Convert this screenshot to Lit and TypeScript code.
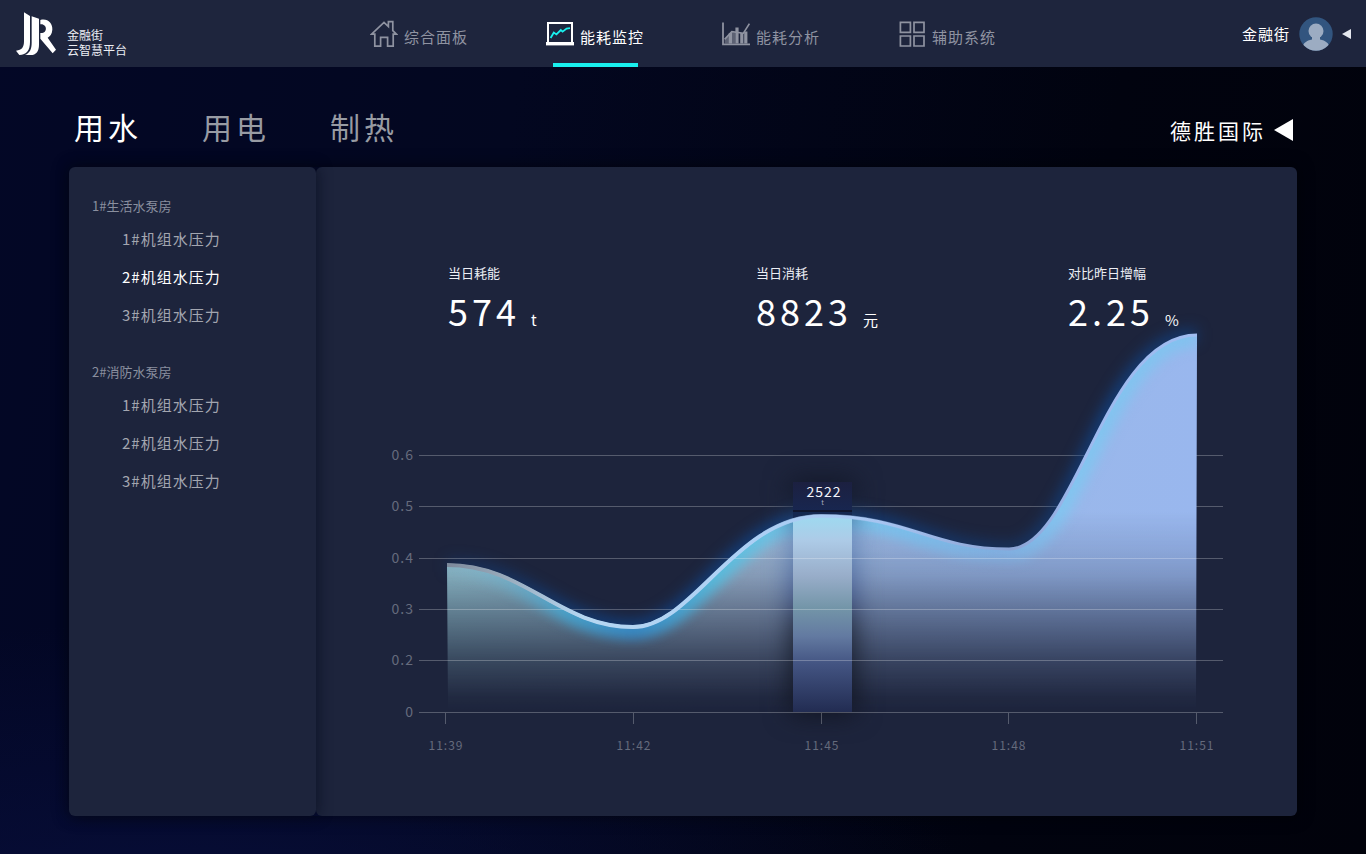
import { LitElement, html, svg, css } from "lit";
import { customElement, state } from "lit/decorators.js";

const NAV = ["综合面板", "能耗监控", "能耗分析", "辅助系统"];
const TABS = ["用水", "用电", "制热"];
const GROUPS = [
  { title: "1#生活水泵房", items: ["1#机组水压力", "2#机组水压力", "3#机组水压力"] },
  { title: "2#消防水泵房", items: ["1#机组水压力", "2#机组水压力", "3#机组水压力"] },
];
const STATS = [
  { label: "当日耗能", value: "574", unit: "t" },
  { label: "当日消耗", value: "8823", unit: "元" },
  { label: "对比昨日增幅", value: "2.25", unit: "%" },
];

const NAV_ICONS = [
  html`<svg class="icon" viewBox="0 0 28 28" fill="none" stroke="currentColor" stroke-width="1.7" aria-hidden="true">
    <path d="M4.8 14.2H1.6L14 2.4l4.4 4.2V1.6h4.4v9l3.6 3.6h-3.2V26.2h-5.6v-8.8h-7v8.8H4.8z" />
  </svg>`,
  html`<svg class="icon" viewBox="0 0 28 28" fill="none" aria-hidden="true">
    <path d="M2 3h24v20H2z" stroke="#fff" stroke-width="2" />
    <path d="M0 22h28v3.4H0z" fill="#fff" />
    <path d="M4.6 18l3.2-5.4 2.6 1.8 4.4-4.4 1.8 1.6 4-3 3.4-.4" stroke="#19f0ee" stroke-width="1.8" />
  </svg>`,
  html`<svg class="icon" viewBox="0 0 28 28" fill="none" aria-hidden="true">
    <path d="M1 2.6V24.4H28" stroke="currentColor" stroke-width="1.8" />
    <path d="M2.6 20L9.4 12.2l4 .6V23.5H2.6z" fill="currentColor" fill-opacity="0.55" />
    <path d="M8.4 13v10.5M15 7.5v16M19.8 13v10.5M23.8 11.500v12" stroke="currentColor" stroke-width="3.2" />
    <path d="M2.6 19.4L9.8 11.6l11.6 1.6L27.4 3.6" stroke="currentColor" stroke-width="1.6" />
  </svg>`,
  html`<svg class="icon" viewBox="0 0 28 28" fill="none" stroke="currentColor" stroke-width="1.7" aria-hidden="true">
    <path d="M2.4 2.4h10v10h-10zM16 2.4h10v10H16zM2.4 16h10v10h-10zM16 16h10v10H16z" />
  </svg>`,
];

const CURVE =
  "M447 565C525 565 559 627 633 627C693 627 736 516 821 516C910 516 930 549 1009 549C1076 549 1103 335 1197 335";
const AREA = `${CURVE}L1196 712H448Z`;
const Y_TICKS = [
  { label: "0.6", y: 456 },
  { label: "0.5", y: 507 },
  { label: "0.4", y: 559 },
  { label: "0.3", y: 610 },
  { label: "0.2", y: 661 },
  { label: "0", y: 713 },
];
const X_TICKS = [
  { label: "11:39", x: 446 },
  { label: "11:42", x: 634 },
  { label: "11:45", x: 822 },
  { label: "11:48", x: 1009 },
  { label: "11:51", x: 1197 },
];

@customElement("usage-chart")
export class UsageChart extends LitElement {
  static styles = css`
    :host {
      display: block;
    }
    .chart {
      display: block;
      width: 100%;
      height: auto;
      overflow: visible;
      font-family: "Noto Sans CJK SC", sans-serif;
      letter-spacing: 1px;
    }
    .grid {
      stroke: #fff;
      stroke-opacity: 0.25;
      stroke-width: 1;
    }
    .y-label {
      fill: #656b7c;
      font-size: 14px;
      text-anchor: end;
    }
    .x-label {
      fill: #656b7c;
      font-size: 12px;
      text-anchor: middle;
    }
    .tip {
      fill: #f2f4fa;
      font-size: 14px;
      text-anchor: middle;
    }
    .tip-unit {
      fill: #a5abc0;
      font-size: 7px;
      text-anchor: middle;
    }
  `;

  private line(y: number) {
    return svg`<path class="grid" d="M419 ${y - 0.5}H1223" />`;
  }

  render() {
    return html`<svg class="chart" viewBox="316 330 981 440" role="img" aria-label="当日耗能">
      <defs>
        <linearGradient id="hue" gradientUnits="userSpaceOnUse" x1="447" y1="0" x2="1197" y2="0">
          <stop offset="0" stop-color="#9dcfdc" />
          <stop offset="0.4" stop-color="#a3bcd8" />
          <stop offset="0.6" stop-color="#9bb8e6" />
          <stop offset="1" stop-color="#99b7ee" />
        </linearGradient>
        <linearGradient id="fade" gradientUnits="userSpaceOnUse" x1="0" y1="512" x2="0" y2="712">
          <stop offset="0" stop-color="#fff" />
          <stop offset="0.2" stop-color="#fff" stop-opacity="0.88" />
          <stop offset="0.32" stop-color="#fff" stop-opacity="0.78" />
          <stop offset="0.5" stop-color="#fff" stop-opacity="0.53" />
          <stop offset="0.74" stop-color="#fff" stop-opacity="0.22" />
          <stop offset="0.93" stop-color="#fff" stop-opacity="0.03" />
          <stop offset="1" stop-color="#fff" stop-opacity="0" />
        </linearGradient>
        <mask id="fade-mask" maskUnits="userSpaceOnUse" x="316" y="300" width="981" height="460">
          <rect x="316" y="300" width="981" height="460" fill="url(#fade)" />
        </mask>
        <linearGradient id="edge" gradientUnits="userSpaceOnUse" x1="447" y1="0" x2="1197" y2="0">
          <stop offset="0" stop-color="#7d899b" />
          <stop offset="0.08" stop-color="#9aacbd" />
          <stop offset="0.18" stop-color="#b5d6f1" />
          <stop offset="0.4" stop-color="#add0f5" />
          <stop offset="0.58" stop-color="#a6c3f0" />
          <stop offset="0.75" stop-color="#8ba3d4" />
          <stop offset="0.85" stop-color="#9db9ee" />
          <stop offset="1" stop-color="#a0bcf0" />
        </linearGradient>
        <linearGradient id="edge-wide" gradientUnits="userSpaceOnUse" x1="447" y1="0" x2="1197" y2="0">
          <stop offset="0" stop-color="#7d899b" />
          <stop offset="0.08" stop-color="#9aacbd" />
          <stop offset="0.18" stop-color="#b5d6f1" />
          <stop offset="0.4" stop-color="#add0f5" />
          <stop offset="0.65" stop-color="#a6c3f0" stop-opacity="0" />
        </linearGradient>
        <linearGradient id="outer" gradientUnits="userSpaceOnUse" x1="447" y1="0" x2="1197" y2="0">
          <stop offset="0" stop-color="#0d4a98" stop-opacity="0.25" />
          <stop offset="0.2" stop-color="#0d4a98" stop-opacity="0.65" />
          <stop offset="0.5" stop-color="#0d4a98" stop-opacity="0.7" />
          <stop offset="0.75" stop-color="#0d4a98" stop-opacity="0.35" />
          <stop offset="0.88" stop-color="#0d4a98" stop-opacity="0.7" />
          <stop offset="1" stop-color="#0d4a98" stop-opacity="0.5" />
        </linearGradient>
        <linearGradient id="inner" gradientUnits="userSpaceOnUse" x1="447" y1="0" x2="1197" y2="0">
          <stop offset="0" stop-color="#7fc8dc" stop-opacity="0" />
          <stop offset="0.08" stop-color="#5fc0dc" stop-opacity="0.35" />
          <stop offset="0.16" stop-color="#3fb0dc" stop-opacity="0.85" />
          <stop offset="0.25" stop-color="#2f8fd0" stop-opacity="0.95" />
          <stop offset="0.36" stop-color="#49c4e4" stop-opacity="0.9" />
          <stop offset="0.5" stop-color="#6cccf0" stop-opacity="0.9" />
          <stop offset="0.62" stop-color="#6cc4f0" stop-opacity="0.8" />
          <stop offset="0.74" stop-color="#70bcee" stop-opacity="0.45" />
          <stop offset="0.82" stop-color="#76ccf2" stop-opacity="0.8" />
          <stop offset="1" stop-color="#76c8f0" stop-opacity="0.8" />
        </linearGradient>
        <linearGradient id="bar" gradientUnits="userSpaceOnUse" x1="0" y1="512" x2="0" y2="712">
          <stop offset="0" stop-color="#9bdcf2" />
          <stop offset="0.14" stop-color="#adcbe7" />
          <stop offset="0.32" stop-color="#98adc9" />
          <stop offset="0.48" stop-color="#7395a8" />
          <stop offset="0.62" stop-color="#637aa1" />
          <stop offset="0.76" stop-color="#435482" />
          <stop offset="1" stop-color="#222c52" />
        </linearGradient>
        <linearGradient id="shade" gradientUnits="userSpaceOnUse" x1="0" y1="482" x2="0" y2="714">
          <stop offset="0" stop-color="#10131f" stop-opacity="0.95" />
          <stop offset="0.1" stop-color="#111a30" stop-opacity="0.75" />
          <stop offset="0.2" stop-color="#3f70b0" stop-opacity="0.45" />
          <stop offset="0.5" stop-color="#2c3f7c" stop-opacity="0.75" />
          <stop offset="0.62" stop-color="#141a28" stop-opacity="0.85" />
          <stop offset="1" stop-color="#10131e" stop-opacity="0.95" />
        </linearGradient>
        <linearGradient id="tip-fill" x1="0" y1="0" x2="0" y2="1">
          <stop offset="0" stop-color="#1c2040" />
          <stop offset="1" stop-color="#18264f" />
        </linearGradient>
        <filter id="blur-outer" color-interpolation-filters="sRGB" filterUnits="userSpaceOnUse" x="400" y="290" width="850" height="400">
          <feGaussianBlur stdDeviation="7" />
        </filter>
        <filter id="blur-inner" color-interpolation-filters="sRGB" filterUnits="userSpaceOnUse" x="400" y="290" width="850" height="400">
          <feGaussianBlur stdDeviation="6" />
        </filter>
        <filter id="blur-shade" color-interpolation-filters="sRGB" filterUnits="userSpaceOnUse" x="720" y="430" width="210" height="340">
          <feGaussianBlur stdDeviation="13" />
        </filter>
        <clipPath id="area-clip"><path d=${AREA} /></clipPath>
      </defs>

      ${Y_TICKS.slice(0, 2).map((t) => this.line(t.y))}
      <path d=${CURVE} fill="none" stroke="url(#outer)" stroke-width="14" filter="url(#blur-outer)" />
      <g mask="url(#fade-mask)"><path d=${AREA} fill="url(#hue)" /></g>
      <g clip-path="url(#area-clip)">
        <path d=${CURVE} fill="none" stroke="url(#inner)" stroke-width="24" stroke-opacity="0.8" filter="url(#blur-inner)" />
      </g>
      <rect x="790" y="480" width="65" height="234" fill="url(#shade)" filter="url(#blur-shade)" />
      <path d="M793 512h59v12h-59z" fill="#14274f" />
      <g clip-path="url(#area-clip)">
        <rect x="793" y="512" width="59" height="201" fill="url(#bar)" />
      </g>
      ${Y_TICKS.slice(2).map((t) => this.line(t.y))}
      <path d=${CURVE} fill="none" stroke="url(#edge)" stroke-width="3" />
      <path d=${CURVE} fill="none" stroke="url(#edge-wide)" stroke-width="4" />
      <rect x="793" y="482" width="59" height="28" fill="url(#tip-fill)" />
      <path d="M793 511h59" stroke="#10162e" stroke-width="2" />
      <text class="tip" x="824" y="497">2522</text>
      <text class="tip-unit" x="823" y="505">t</text>

      ${Y_TICKS.map((t) => svg`<text class="y-label" x="414" y=${t.y + 4}>${t.label}</text>`)}
      ${X_TICKS.map(
        (t) => svg`<path class="grid" d="M${t.x - 0.5} 713V724" />
          <text class="x-label" x=${t.x} y="750">${t.label}</text>`
      )}
    </svg>`;
  }
}

@customElement("app-root")
export class AppRoot extends LitElement {
  @state() private tab = 0;
  @state() private unit = "0-1";

  static styles = css`
    :host {
      display: flex;
      flex-direction: column;
      box-sizing: border-box;
      min-height: 100vh;
      color: #fff;
      font-family: "Noto Sans CJK SC", sans-serif;
      background:
        radial-gradient(ellipse 60% 35% at 12% 108%, rgba(10, 18, 72, 0.6), transparent),
        linear-gradient(100deg, #030726 0%, #030720 35%, #01030f 75%, #01020b 100%);
    }
    a {
      color: inherit;
      text-decoration: none;
    }
    button,
    select {
      appearance: none;
      margin: 0;
      padding: 0;
      border: 0;
      background: none;
      color: inherit;
      font: inherit;
      letter-spacing: inherit;
      cursor: pointer;
    }
    .header {
      display: grid;
      grid-template-columns: 1fr auto 1fr;
      height: 67px;
      background: #1e253d;
    }
    .brand {
      display: flex;
      align-items: flex-start;
      gap: 11px;
      padding: 12px 0 0 16px;
      font-size: 12px;
      line-height: 15px;
      color: #eceef4;
    }
    .logo {
      width: 40px;
      height: 44px;
    }
    .brand-name {
      padding-top: 15px;
    }
    .nav {
      display: grid;
      grid-template-columns: repeat(4, 176px);
    }
    .nav-link {
      display: flex;
      align-items: center;
      justify-content: center;
      gap: 6px;
      padding-top: 6px;
      font-size: 15px;
      letter-spacing: 1px;
      color: #8f93a1;
    }
    .nav-link.active {
      color: #fff;
      background: linear-gradient(#19f0ee, #19f0ee) center bottom / 85px 4px no-repeat;
    }
    .icon {
      width: 28px;
      height: 28px;
      margin-bottom: 6px;
    }
    .user {
      display: flex;
      align-items: center;
      justify-self: end;
      gap: 9px;
      padding-right: 15px;
      font-size: 15px;
      letter-spacing: 1px;
    }
    .avatar {
      width: 34px;
      height: 34px;
    }
    .caret {
      width: 9px;
      height: 10px;
    }
    .main {
      padding: 0 69px 38px;
    }
    .bar {
      display: flex;
      align-items: center;
      justify-content: space-between;
      height: 100px;
      padding: 18px 4px 0 5px;
      box-sizing: border-box;
    }
    .tabs {
      display: flex;
      gap: 60px;
    }
    .tab {
      font-size: 30px;
      line-height: 44px;
      letter-spacing: 4px;
      color: #989ba3;
    }
    .tab.active {
      color: #fff;
    }
    .site {
      display: flex;
      align-items: center;
      gap: 8px;
      font-size: 21px;
      line-height: 32px;
      letter-spacing: 3px;
      padding-top: 8px;
    }
    .site option {
      color: #000;
    }
    .site-caret {
      width: 19px;
      height: 22px;
    }
    .panels {
      display: grid;
      grid-template-columns: 247px 1fr;
      box-shadow: 0 0 16px rgba(0, 0, 0, 0.5);
      border-radius: 6px;
    }
    .sidebar,
    .board {
      background: #1d243c;
      border-radius: 6px;
    }
    .sidebar {
      position: relative;
      z-index: 1;
      padding: 25px 23px;
      box-shadow: 2px 0 14px rgba(5, 10, 26, 0.6);
    }
    .group {
      margin-bottom: 24px;
    }
    .group-title {
      margin: 0;
      font-size: 13px;
      font-weight: 400;
      line-height: 28px;
      color: #8a8f9f;
    }
    .list {
      margin: 0;
      padding: 0 0 0 30px;
      list-style: none;
    }
    .item {
      display: block;
      font-size: 15px;
      line-height: 38px;
      letter-spacing: 1px;
      color: #a3a6b0;
    }
    .item.active {
      color: #fff;
    }
    .board {
      padding: 96px 0 46px;
    }
    .stats {
      display: grid;
      grid-template-columns: 308fr 312fr 150fr;
      margin: 0;
      padding: 0 79px 0 132px;
    }
    .stat-label {
      font-size: 13px;
      line-height: 20px;
      color: #eceef4;
    }
    .stat-value {
      display: flex;
      align-items: baseline;
      gap: 11px;
      margin: 0;
      font-size: 36px;
      line-height: 54px;
      letter-spacing: 4px;
    }
    .stat-unit {
      font-size: 15px;
      line-height: 20px;
      letter-spacing: 0;
    }
    .plot {
      display: block;
      margin-top: -7px;
    }
  `;

  render() {
    return html`
      <header class="header">
        <a class="brand" href="#">
          <svg class="logo" viewBox="48 36 120 132" fill="#fff" aria-hidden="true">
            <path d="M72 37L90 48V126C90 150 80 165 58 165L48 152C66 151 72 141 72 124Z" />
            <path d="M95 49L117 56V134C117 154 108 165 92 165H75C90 158 95 147 95 128Z" />
            <path d="M121 60C143 54 158 70 157 89C156 102 150 109 143 113L168 149L158 160L121 116V99H127C140 97 141 80 131 75C128 73 125 73 121 73Z" />
          </svg>
          <span class="brand-name">金融街<br />云智慧平台</span>
        </a>
        <nav class="nav">
          ${NAV.map(
            (name, i) => html`<a class="nav-link ${i === 1 ? "active" : ""}" href="#">${NAV_ICONS[i]}<span>${name}</span></a>`
          )}
        </nav>
        <button class="user" type="button">
          <span>金融街</span>
          <svg class="avatar" viewBox="0 0 34 34" aria-hidden="true">
            <clipPath id="round"><circle cx="17" cy="17" r="16.7" /></clipPath>
            <circle cx="17" cy="17" r="16.7" fill="#32557f" />
            <g clip-path="url(#round)" fill="#9cacc2">
              <circle cx="17" cy="14" r="7.5" />
              <path d="M13 18h8v4.5c5.5 1 9.5 4 9.5 8.5v5H3.5v-5c0-4.5 4-7.5 9.5-8.5z" />
            </g>
          </svg>
          <svg class="caret" viewBox="0 0 9 10" aria-hidden="true"><path d="M9 0v10L0 5z" fill="#e4e7ee" /></svg>
        </button>
      </header>
      <main class="main">
        <div class="bar">
          <div class="tabs" role="tablist">
            ${TABS.map(
              (name, i) => html`<button
                class="tab ${i === this.tab ? "active" : ""}"
                type="button"
                role="tab"
                aria-selected=${i === this.tab}
                @click=${() => (this.tab = i)}
              >${name}</button>`
            )}
          </div>
          <label class="site">
            <select aria-label="德胜国际">
              <option>德胜国际</option>
            </select>
            <svg class="site-caret" viewBox="0 0 19 22" aria-hidden="true"><path d="M19 0v22L0 11z" fill="#fff" /></svg>
          </label>
        </div>
        <div class="panels">
          <aside class="sidebar">
            ${GROUPS.map(
              (g, gi) => html`<section class="group">
                <h2 class="group-title">${g.title}</h2>
                <ul class="list">
                  ${g.items.map((name, i) => {
                    const key = `${gi}-${i}`;
                    return html`<li>
                      <a class="item ${key === this.unit ? "active" : ""}" href="#" @click=${() => (this.unit = key)}>${name}</a>
                    </li>`;
                  })}
                </ul>
              </section>`
            )}
          </aside>
          <section class="board">
            <dl class="stats">
              ${STATS.map(
                (s) => html`<div>
                  <dt class="stat-label">${s.label}</dt>
                  <dd class="stat-value"><span>${s.value}</span><span class="stat-unit">${s.unit}</span></dd>
                </div>`
              )}
            </dl>
            <usage-chart class="plot"></usage-chart>
          </section>
        </div>
      </main>
    `;
  }
}
